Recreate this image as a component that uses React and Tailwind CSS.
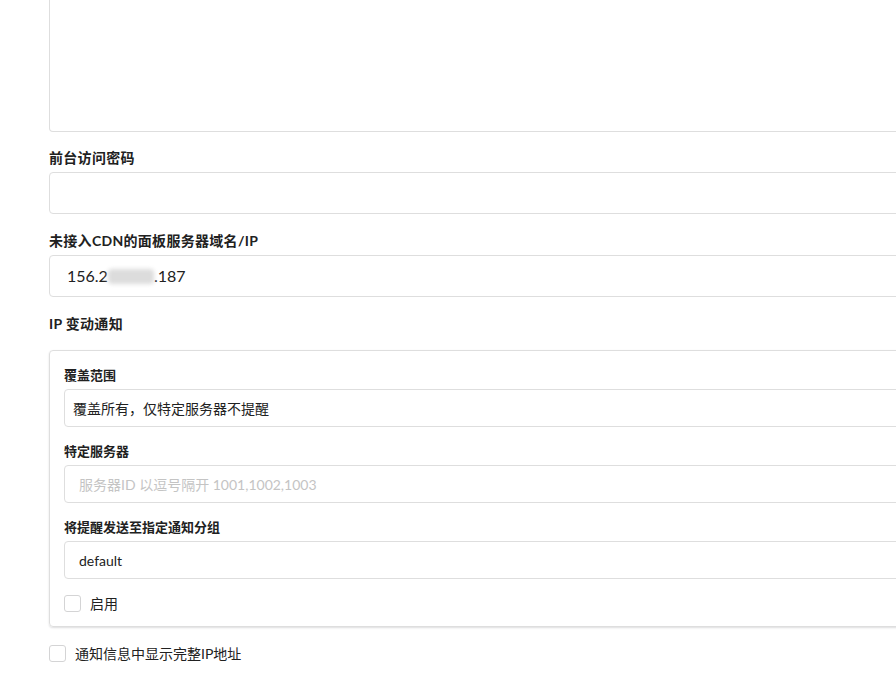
import React from 'react';

const font = { fontFamily: '"Lato", "Noto Sans CJK SC", sans-serif' };

const Label = ({ children, big }) => (
  <div className={`h-[18px] leading-[18px] font-bold text-[#212121] mb-[5px] ${big ? 'text-[14px] tracking-[0.3px]' : 'text-[13px]'}`}>
    {children}
  </div>
);

const Checkbox = ({ label }) => (
  <label className="flex items-center h-[17px]">
    <span className="w-[17px] h-[17px] border border-[#d4d4d5] rounded-[3px] bg-white shrink-0" />
    <span className="ml-[9px] text-[14px] leading-[17px] text-[#212121]">{label}</span>
  </label>
);

const App = () => {
  return (
    <div className="w-[896px] h-[673px] overflow-hidden bg-white" style={font}>
      <div className="ml-[49px] w-[1000px] flex flex-col">
        {/* textarea, top is scrolled away */}
        <div className="h-[132px] border border-t-0 border-[#dedede] rounded-b-[4px]" />

        <div className="mt-[17px]">
          <Label big>前台访问密码</Label>
          <div className="h-[42px] border border-[#dedede] rounded-[4px]" />
        </div>

        <div className="mt-[18px]">
          <Label big>未接入CDN的面板服务器域名/IP</Label>
          <div className="h-[42px] border border-[#dedede] rounded-[4px] flex items-center pl-[17px] text-[16px] text-[#212121]">
            <span>156.2</span>
            {/* masked part of the address */}
            <span className="inline-block w-[46px] h-[15px] bg-[#dcdcdc] blur-[2px] rounded-sm" />
            <span>.187</span>
          </div>
        </div>

        <div className="mt-[18px]">
          <div className="h-[18px] leading-[18px] text-[14px] tracking-[0.3px] font-bold text-[#212121]">IP 变动通知</div>
        </div>

        <div className="mt-[17px] border border-[#dedede] rounded-[4px] shadow-[0_1px_2px_0_rgba(34,36,38,0.15)] px-[14px] pt-[15px] pb-[14px]">
          <Label>覆盖范围</Label>
          <div className="h-[38px] border border-[#dedede] rounded-[4px] flex items-center px-[8px] text-[14px] text-[#212121]">
            覆盖所有，仅特定服务器不提醒
          </div>

          <div className="mt-[15px]">
            <Label>特定服务器</Label>
            <div className="h-[38px] border border-[#dedede] rounded-[4px] flex items-center px-[14px] text-[14px] text-[#c4c4c4]">
              服务器ID 以逗号隔开 1001,1002,1003
            </div>
          </div>

          <div className="mt-[15px]">
            <Label>将提醒发送至指定通知分组</Label>
            <div className="h-[38px] border border-[#dedede] rounded-[4px] flex items-center px-[14px] text-[14px] text-[#212121]">
              default
            </div>
          </div>

          <div className="mt-[16px]">
            <Checkbox label="启用" />
          </div>
        </div>

        <div className="mt-[18px]">
          <Checkbox label="通知信息中显示完整IP地址" />
        </div>
      </div>
    </div>
  );
};

export default App;
